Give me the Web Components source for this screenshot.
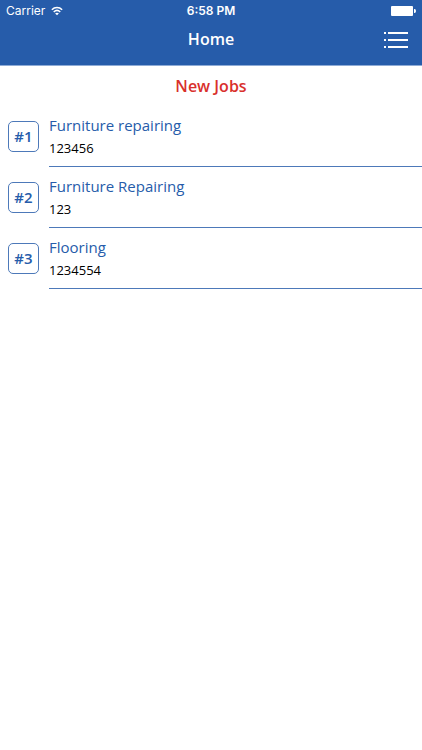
<!DOCTYPE html>
<html lang="en">
<head>
<meta charset="utf-8">
<meta name="viewport" content="width=device-width, initial-scale=1">
<title>Home</title>
<style>
  :root {
    --blue: #265caa;
    --line: #4d79b9;
    --red: #d9302c;
  }

  body {
    margin: 0;
    background: #fff;
    font-family: "Open Sans", "Noto Sans", sans-serif;
  }
</style>
</head>
<body>
<job-app></job-app>

<script>
function attach(element, html) {
  const template = document.createElement("template")
  template.innerHTML = html
  element.attachShadow({ mode: "open" })
  element.shadowRoot.appendChild(template.content.cloneNode(true))
}

class StatusBar extends HTMLElement {
  constructor() {
    super()
    attach(this, `
      <style>
        :host {
          display: grid;
          grid-template-columns: 1fr auto 1fr;
          align-items: center;
          height: 22px;
          padding: 0 6px;
          font: 12px/22px Inter, "Liberation Sans", sans-serif;
        }

        .carrier {
          display: flex;
          align-items: center;
          gap: 6px;
        }

        .time {
          font-weight: 600;
        }

        .battery {
          justify-self: end;
        }

        svg {
          display: block;
        }
      </style>

      <div class="carrier">
        <span>Carrier</span>
        <svg width="12" height="10" viewBox="0 0 14 11" fill="none" stroke="currentColor" stroke-width="1.8" aria-hidden="true">
          <path d="M1 4C4.4.7 9.6.7 13 4"/>
          <path d="M3.2 6.6C5.4 4.5 8.6 4.5 10.8 6.6"/>
          <path d="M7 10.6L4.8 8.4C6.1 7.3 7.9 7.3 9.2 8.4Z" fill="currentColor" stroke="none"/>
        </svg>
      </div>
      <span class="time">6:58 PM</span>
      <svg class="battery" width="25" height="10" viewBox="0 0 25 10" fill="currentColor" aria-hidden="true">
        <rect width="22" height="10" rx="1"/>
        <path d="M23 3h.5a1.5 2 0 0 1 0 4H23z"/>
      </svg>
    `)
  }
}

class NavBar extends HTMLElement {
  constructor() {
    super()
    attach(this, `
      <style>
        :host {
          display: grid;
          grid-template-columns: 1fr auto 1fr;
          height: 43px;
          padding: 0 8px;
        }

        h1 {
          grid-column: 2;
          margin: 0;
          font-size: 16px;
          font-weight: 600;
          line-height: 34px;
        }

        button {
          justify-self: end;
          align-self: start;
          padding: 9px 6px;
          border: 0;
          background: none;
          color: inherit;
          cursor: pointer;
        }

        svg {
          display: block;
        }
      </style>

      <h1><slot></slot></h1>
      <button type="button" aria-label="Menu">
        <svg width="24" height="18" viewBox="0 0 24 18" fill="currentColor" aria-hidden="true">
          <path d="M0 1h2v2H0zM4 1h20v2H4zM0 8h2v2H0zM4 8h20v2H4zM0 15h2v2H0zM4 15h20v2H4z"/>
        </svg>
      </button>
    `)
  }
}

class JobItem extends HTMLElement {
  constructor() {
    super()
    attach(this, `
      <style>
        :host {
          display: flex;
          gap: 10px;
          padding-left: 8px;
        }

        .badge {
          box-sizing: border-box;
          width: 31px;
          height: 31px;
          margin-top: 15px;
          border: 1px solid var(--line);
          border-radius: 5px;
          color: var(--blue);
          font-size: 15px;
          font-weight: 600;
          line-height: 29px;
          text-align: center;
        }

        .text {
          flex: 1;
          padding: 8px 0 6px;
          border-bottom: 1px solid var(--line);
        }

        h3, p {
          margin: 0;
          font-weight: 400;
        }

        h3 {
          color: var(--blue);
          font-size: 15px;
          line-height: 22px;
        }

        p {
          color: #000;
          font-size: 13px;
          line-height: 24px;
        }
      </style>

      <div class="badge"><slot name="number"></slot></div>
      <div class="text">
        <h3><slot></slot></h3>
        <p><slot name="code"></slot></p>
      </div>
    `)
  }
}

class JobApp extends HTMLElement {
  constructor() {
    super()
    attach(this, `
      <style>
        :host {
          display: block;
        }

        header {
          border-bottom: 1px solid #8eabd6;
          background: var(--blue);
          color: #fff;
        }

        h2 {
          margin: 0;
          padding: 8px 0;
          color: var(--red);
          font-size: 16px;
          font-weight: 600;
          line-height: 24px;
          text-align: center;
        }
      </style>

      <header>
        <status-bar></status-bar>
        <nav-bar>Home</nav-bar>
      </header>
      <main>
        <h2>New Jobs</h2>
        <job-item><span slot="number">#1</span>Furniture repairing<span slot="code">123456</span></job-item>
        <job-item><span slot="number">#2</span>Furniture Repairing<span slot="code">123</span></job-item>
        <job-item><span slot="number">#3</span>Flooring<span slot="code">1234554</span></job-item>
      </main>
    `)
  }
}

customElements.define("status-bar", StatusBar)
customElements.define("nav-bar", NavBar)
customElements.define("job-item", JobItem)
customElements.define("job-app", JobApp)
</script>
</body>
</html>
